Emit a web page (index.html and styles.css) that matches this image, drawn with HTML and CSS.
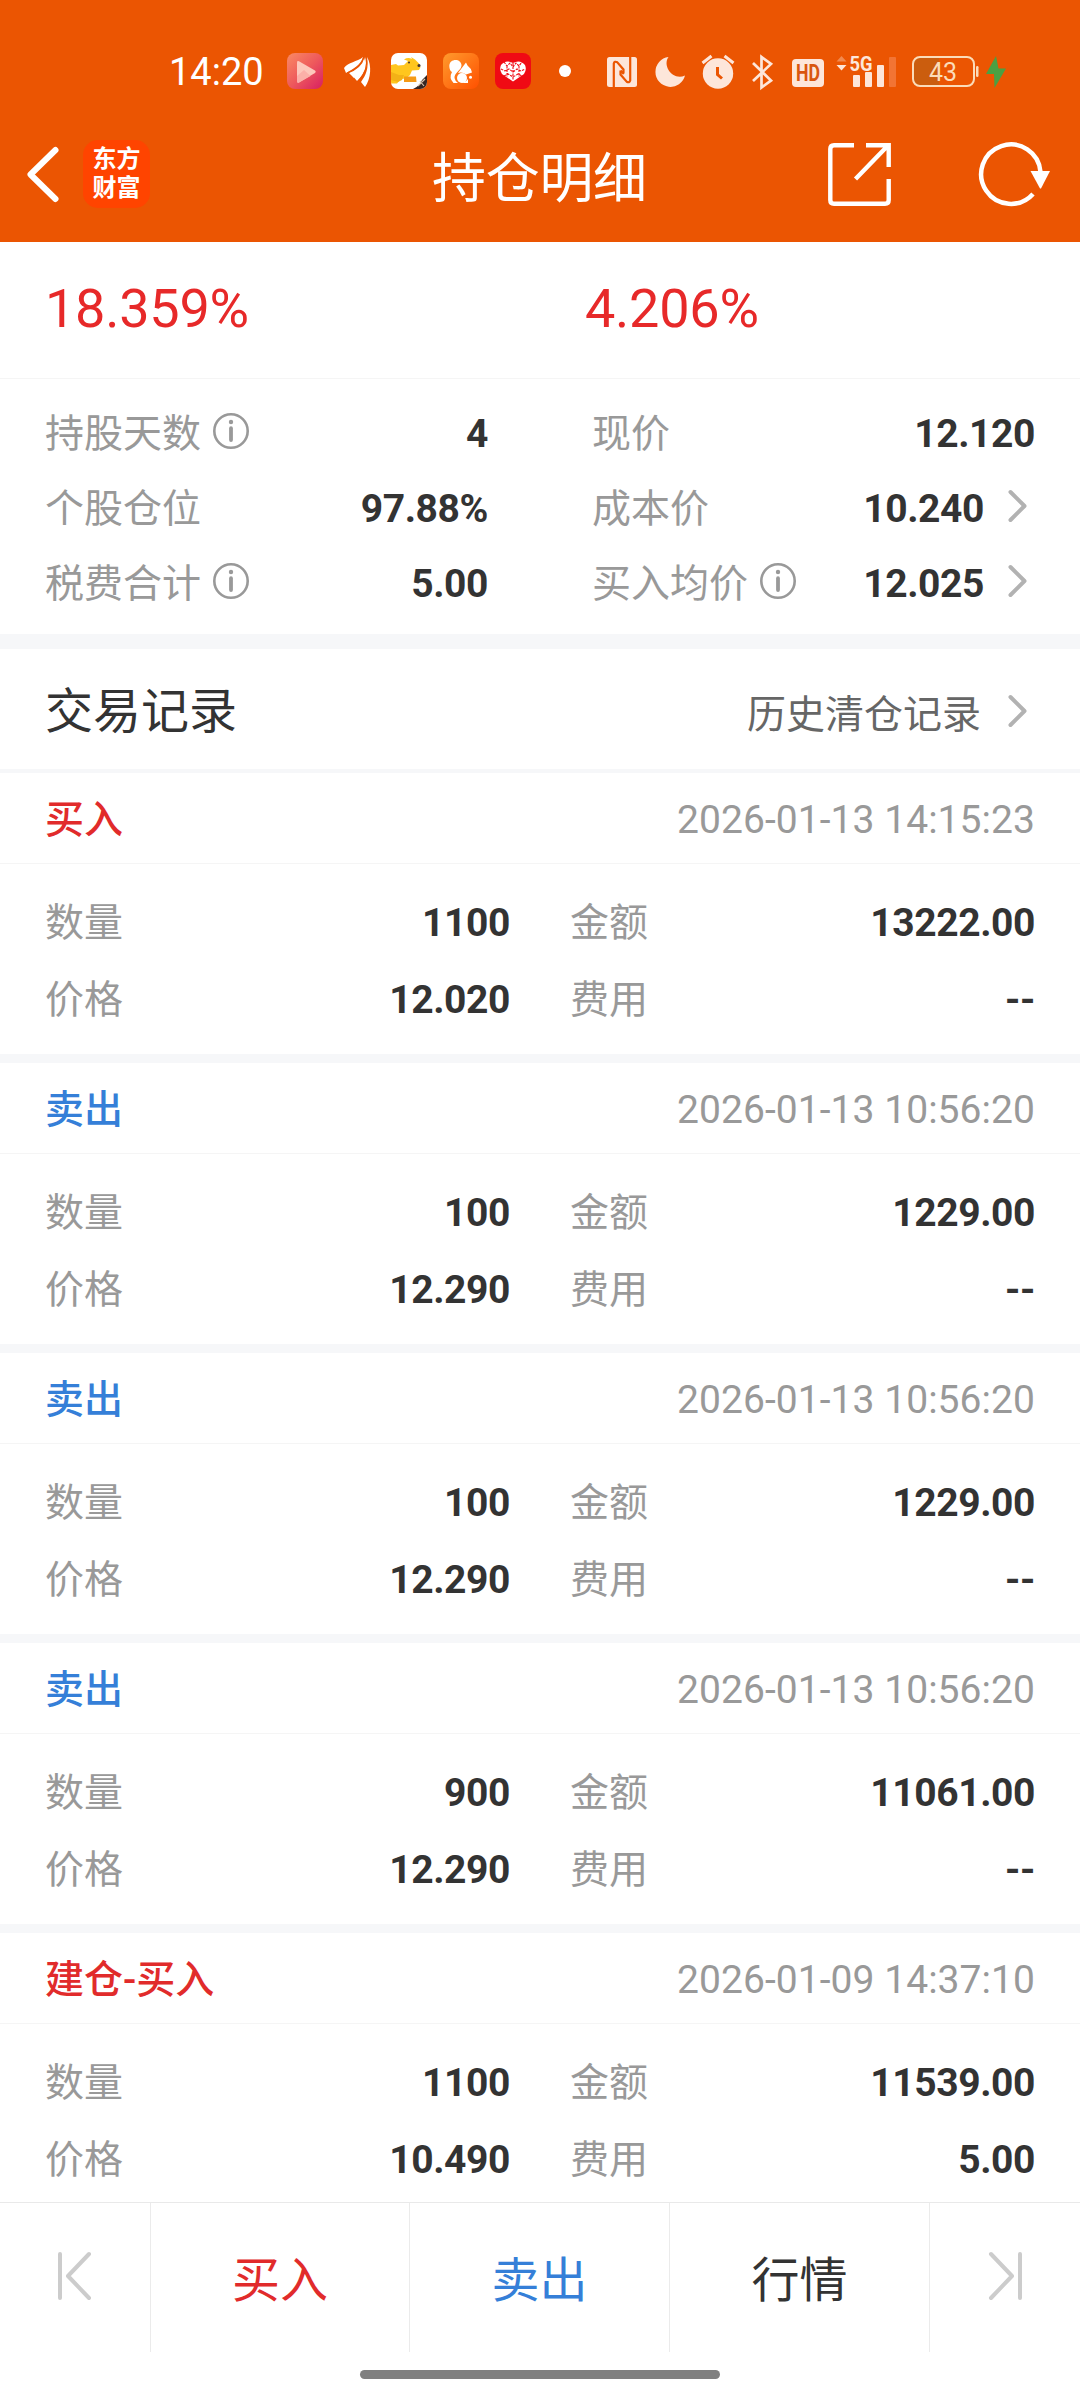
FILE: index.html
```html
<!DOCTYPE html>
<html lang="zh-CN">
<head>
<meta charset="utf-8">
<title>持仓明细</title>
<link rel="stylesheet" href="styles.css">
</head>
<body>
<svg class="defs" width="0" height="0" aria-hidden="true">
  <symbol id="info" viewBox="0 0 36 36"><circle cx="18" cy="18" r="16.7" fill="none" stroke="#999" stroke-width="2.6"/><circle cx="18" cy="9" r="2.2" fill="#999"/><path d="M18 15.2V27" stroke="#999" stroke-width="3.8" stroke-linecap="round"/></symbol>
  <symbol id="chevron" viewBox="0 0 20 34"><path d="M2.5 3L16.5 17L2.5 31" fill="none" stroke="#b2b2b2" stroke-width="4" stroke-linecap="round" stroke-linejoin="round"/></symbol>
</svg>
<header class="header">
  <div class="status">
    <span class="clock">14:20</span>
    <div class="apps">
      <svg width="36" height="42" viewBox="287 50 36 42">
        <defs><linearGradient id="pink" x1="0" y1="0" x2="1" y2="1"><stop offset="0" stop-color="#fa8a64"/><stop offset=".5" stop-color="#ee5a5c"/><stop offset="1" stop-color="#d81e62"/></linearGradient></defs>
        <rect x="287" y="53" width="36" height="36" rx="8" fill="url(#pink)"/>
        <path d="M297 62.500q0-2 2-1.200l16 9.200q1.600 1.200 0 2.400l-16 9.500q-2 .8-2-1.200z" fill="#fdc7bb"/><path d="M297 76l7-6 6.500 6L299 82.500q-2 .6-2-1.200z" fill="#fbb0a8"/>
      </svg>
      <svg width="36" height="42" viewBox="339 50 36 42">
        <g fill="#fff"><path d="M344 68C348 62 357 62 363 57C361 65 353 69 346 73Z"/><path d="M352 75C357 69 364 66 365 57C369 63 366 72 357 81Z"/><path d="M349 73C355 70 361 66 364 58C366 66 359 72 354 78Z"/><path d="M361 82C366 75 369 68 367 57C372 65 371 79 365 87Z"/></g>
        <g fill="none" stroke="#eb5502" stroke-width="1.300"><path d="M347 73C356 70 362 65 364 57"/><path d="M358 82C365 74 368 65 366 57"/></g>
      </svg>
      <svg width="36" height="42" viewBox="391 50 36 42">
        <clipPath id="app3"><rect x="391" y="53" width="36" height="36" rx="7"/></clipPath>
        <g clip-path="url(#app3)"><path d="M391 53h36v36h-36z" fill="#fff"/><path d="M391 65l5-1 2 1.500 6-.5 4-4-4-1.500q4-2.500 8-.5l-1-2 4 2.500 4 4 1.500 3.500-1.500 3-7 .5-2 4.500-4 3.500-5 .5-4 4.500h-7z" fill="#ffc61e"/><path d="M391 72l8 3 5 0-2 5-4 2-7-2z" fill="#f3b117"/><path d="M404 76.500h12l.5 5.500h-12.500z" fill="#f59a16"/><circle cx="419" cy="65.500" r="1.500" fill="#433"/><circle cx="409" cy="62.500" r="1" fill="#433"/><path d="M427 75v14h-14q7-3 9-9z" fill="#362623"/><path d="M418 86l3-3M422 82l3-3M420 81l4 5" stroke="#d9c1aa" stroke-width="1.200"/></g>
      </svg>
      <svg width="36" height="42" viewBox="443 50 36 42">
        <defs><linearGradient id="ucbg" x1="0" y1="0" x2="1" y2="1"><stop offset="0" stop-color="#ff9b2d"/><stop offset="1" stop-color="#ff5000"/></linearGradient></defs>
        <rect x="443" y="53" width="36" height="36" rx="8" fill="url(#ucbg)"/>
        <path d="M449.300 66C449.300 58 461.500 58 461.500 65.500C461.500 70 454 73 454.500 78Q455 81 458 83H453.500Q448.500 78 452 72Q449.500 71 449.300 66Z" fill="#fff"/>
        <path d="M458 73L466 62.500L467.500 65.500Q471 68 472 72.500L466 74.500Q462 71.500 458 73Z" fill="#fff"/>
        <circle cx="462" cy="78" r="5" fill="#fff"/><path d="M459 83Q465 83 468 79V83Z" fill="#fff"/><circle cx="470.500" cy="77.300" r="1.500" fill="#fff"/>
      </svg>
      <svg width="36" height="42" viewBox="495 50 36 42">
        <rect x="495" y="53" width="36" height="36" rx="8" fill="#f00a14"/>
        <path d="M513 81.500L502 74q-3-4-1-9 5-6 12-2 7-4 12 2 2 5-1 9z" fill="#fff"/>
        <g fill="none" stroke="#f00a14" stroke-width="1.100"><path d="M501 69l4 2 4-2 4 3 4-3 4 2 4-2M504 62l3 4 3-3 3 4 3-4 3 3 3-4M504 76l4-2 5 3 5-3 4 2M507 66v11M519 66v11M513 63v17" stroke-dasharray="2.500 1"/></g>
      </svg>
    </div>
    <span class="dot"></span>
    <div class="signals">
      <svg width="30" height="42" viewBox="607 50 30 42"><rect x="607" y="57" width="30" height="30" rx="2.500" fill="#fde6da"/><path d="M613.800 87V63.500Q614.500 60.800 617.300 62.300L623.500 69.500V73.500M630.200 57V80.500Q629.500 83.200 626.700 81.700L620.500 74.500V70.500M620.500 70.500L623.800 74" fill="none" stroke="#eb5502" stroke-width="2.200"/></svg>
      <svg width="30" height="42" viewBox="655 50 30 42"><path d="M668.500 57C662 66 673 81 685 75.500A15 15 0 1 1 668.500 57Z" fill="#fde6da"/></svg>
      <svg width="31" height="42" viewBox="703 50 31 42"><circle cx="718" cy="73.500" r="15.200" fill="#fde6da"/><path d="M702.500 63L711.500 56M733.500 63L724.500 56" stroke="#fde6da" stroke-width="3"/><path d="M717.500 67V74.500L722 78.500" fill="none" stroke="#eb5502" stroke-width="3"/></svg>
      <svg width="22" height="42" viewBox="752 50 22 42"><path d="M753 63L771 80.500L761.500 87.500V57L771 64L753 81" fill="none" stroke="#fde6da" stroke-width="2.700"/></svg>
      <svg width="32" height="42" viewBox="792 50 32 42"><rect x="792" y="59" width="32" height="28" rx="4" fill="#fde6da"/><text x="808" y="81" class="hd" text-anchor="middle" textLength="24" lengthAdjust="spacingAndGlyphs">HD</text></svg>
      <svg class="cell" width="60" height="42" viewBox="836 50 60 42"><path d="M836.500 61.500L841.500 56L846.500 61.500Z" fill="#f18a50"/><path d="M836.500 65L841.500 70.500L846.500 65Z" fill="#fde6da"/><text x="849.500" y="70.500" class="net" textLength="23" lengthAdjust="spacingAndGlyphs">5G</text><g fill="#fde6da"><rect x="853" y="75" width="7" height="12" rx="1"/><rect x="865" y="72" width="7" height="15" rx="1"/><rect x="877" y="65" width="7" height="22" rx="1"/></g><rect x="889" y="57" width="7" height="30" rx="1" fill="#f27434"/></svg>
      <svg class="battery" width="94" height="42" viewBox="912 50 94 42"><path d="M919 58h20v28h-20q-6 0-6-6v-16q0-6 6-6z" fill="#cb5d0e"/><rect x="913" y="57" width="61" height="29" rx="7" fill="none" stroke="#fbdcb9" stroke-width="2"/><rect x="976" y="66" width="2.500" height="11" rx="1.200" fill="#fbdcb9"/><text x="943" y="80.500" class="pct" text-anchor="middle">43</text><path d="M996 56L986 74H994L994.500 88L1006 68.500H998.500Z" fill="#4ba043"/></svg>
    </div>
  </div>
  <nav class="navbar">
    <svg class="back" width="36" height="60" viewBox="25 144 36 60"><path d="M55.500 150L30.500 174.500L55.500 199" fill="none" stroke="#fff" stroke-width="6" stroke-linecap="round" stroke-linejoin="round"/></svg>
    <div class="logo"><span>东方</span><span>财富</span></div>
    <h1 class="title">持仓明细</h1>
    <svg class="share" width="64" height="64" viewBox="828 142 64 64"><path d="M854 145.200H834Q830.300 145.200 830.300 149V200Q830.300 203.700 834 203.700H885Q888.700 203.700 888.700 200V179M866 145.200H888.700V167M888 145.500L855.500 179" fill="none" stroke="#fff" stroke-width="4.400"/></svg>
    <svg class="refresh" width="72" height="66" viewBox="978 141 72 66"><path d="M1040.500 172A29.700 29.700 0 1 0 1033 194" fill="none" stroke="#fff" stroke-width="4.500"/><path d="M1030.500 171H1050L1041 188.500H1040Z" fill="#fff"/></svg>
  </nav>
</header>

<main class="content">
  <section class="rates"><span>18.359%</span><span>4.206%</span></section>
  <section class="summary">
    <div class="col">
      <div class="item"><span class="label">持股天数</span><svg class="info"><use href="#info"/></svg><b>4</b></div>
      <div class="item"><span class="label">个股仓位</span><b>97.88%</b></div>
      <div class="item"><span class="label">税费合计</span><svg class="info"><use href="#info"/></svg><b>5.00</b></div>
    </div>
    <div class="col">
      <div class="item"><span class="label">现价</span><b>12.120</b></div>
      <div class="item"><span class="label">成本价</span><b>10.240</b><svg class="chevron"><use href="#chevron"/></svg></div>
      <div class="item"><span class="label">买入均价</span><svg class="info"><use href="#info"/></svg><b>12.025</b><svg class="chevron"><use href="#chevron"/></svg></div>
    </div>
  </section>
  <section class="records-head"><h2>交易记录</h2><a class="history">历史清仓记录</a><svg class="chevron"><use href="#chevron"/></svg></section>

  <article class="record">
    <div class="record-head"><span class="buy">买入</span><time>2026-01-13 14:15:23</time></div>
    <div class="grid">
      <div class="cellrow"><span class="label">数量</span><b>1100</b></div><div class="cellrow"><span class="label">金额</span><b>13222.00</b></div>
      <div class="cellrow"><span class="label">价格</span><b>12.020</b></div><div class="cellrow"><span class="label">费用</span><b>--</b></div>
    </div>
  </article>
  <article class="record">
    <div class="record-head"><span class="sell">卖出</span><time>2026-01-13 10:56:20</time></div>
    <div class="grid">
      <div class="cellrow"><span class="label">数量</span><b>100</b></div><div class="cellrow"><span class="label">金额</span><b>1229.00</b></div>
      <div class="cellrow"><span class="label">价格</span><b>12.290</b></div><div class="cellrow"><span class="label">费用</span><b>--</b></div>
    </div>
  </article>
  <article class="record">
    <div class="record-head"><span class="sell">卖出</span><time>2026-01-13 10:56:20</time></div>
    <div class="grid">
      <div class="cellrow"><span class="label">数量</span><b>100</b></div><div class="cellrow"><span class="label">金额</span><b>1229.00</b></div>
      <div class="cellrow"><span class="label">价格</span><b>12.290</b></div><div class="cellrow"><span class="label">费用</span><b>--</b></div>
    </div>
  </article>
  <article class="record">
    <div class="record-head"><span class="sell">卖出</span><time>2026-01-13 10:56:20</time></div>
    <div class="grid">
      <div class="cellrow"><span class="label">数量</span><b>900</b></div><div class="cellrow"><span class="label">金额</span><b>11061.00</b></div>
      <div class="cellrow"><span class="label">价格</span><b>12.290</b></div><div class="cellrow"><span class="label">费用</span><b>--</b></div>
    </div>
  </article>
  <article class="record">
    <div class="record-head"><span class="buy">建仓-买入</span><time>2026-01-09 14:37:10</time></div>
    <div class="grid">
      <div class="cellrow"><span class="label">数量</span><b>1100</b></div><div class="cellrow"><span class="label">金额</span><b>11539.00</b></div>
      <div class="cellrow"><span class="label">价格</span><b>10.490</b></div><div class="cellrow"><span class="label">费用</span><b>5.00</b></div>
    </div>
  </article>
</main>

<footer class="footer">
  <div class="tabs">
    <div class="tab arrow"><svg width="34" height="48" viewBox="0 0 34 48"><path d="M2 2V46M31 2L10 24L31 46" fill="none" stroke="#ccc" stroke-width="4" stroke-linecap="round" stroke-linejoin="round"/></svg></div>
    <div class="tab buy">买入</div>
    <div class="tab sell">卖出</div>
    <div class="tab">行情</div>
    <div class="tab arrow"><svg width="34" height="48" viewBox="0 0 34 48"><path d="M32 2V46M3 2L24 24L3 46" fill="none" stroke="#ccc" stroke-width="4" stroke-linecap="round" stroke-linejoin="round"/></svg></div>
  </div>
  <div class="home"></div>
</footer>
</body>
</html>
```
FILE: styles.css
```css
* { box-sizing: border-box; }
body {
  margin: 0;
  width: 1080px;
  height: 2400px;
  display: flex;
  flex-direction: column;
  overflow: hidden;
  background: #fff;
  color: #333;
  font: 39px/54px Roboto, "Noto Sans CJK SC", sans-serif;
  white-space: nowrap;
}
svg { display: block; flex: none; overflow: visible; }
.defs { position: absolute; }

/* header */
.header { height: 242px; flex: none; background: #eb5502; color: #fff; }
.status { height: 106px; padding: 50px 74px 14px 169px; display: flex; align-items: center; }
.clock { width: 118px; font-size: 38px; line-height: 42px; padding-top: 2px; }
.apps { display: flex; gap: 16px; }
.dot { width: 12px; height: 12px; border-radius: 50%; background: #fff; margin-left: 28px; }
.signals { display: flex; gap: 18px; margin-left: 36px; }
.cell { margin-left: -6px; }
.battery { margin-left: -2px; }
.hd { font: 700 23px Roboto, sans-serif; fill: #d9560f; }
.net { font: 700 20px Roboto, sans-serif; fill: #fde6da; }
.pct { font: 400 25px Roboto, sans-serif; fill: #fbdcb9; }

.navbar { height: 136px; display: flex; align-items: center; padding: 0 30px 0 25px; }
.back { margin-right: 22px; }
.logo {
  width: 67px;
  height: 68px;
  border-radius: 15px;
  background: #ff4400;
  display: flex;
  flex-direction: column;
  align-items: center;
  justify-content: center;
  font-size: 24px;
  font-weight: 700;
  line-height: 29px;
}
.title { margin: 0 0 0 282px; width: 216px; font-size: 54px; font-weight: 400; line-height: 64px; letter-spacing: -0.3px; padding-top: 11px; }
.share { margin-left: 180px; }
.refresh { margin-left: 86px; }

/* summary */
.content { flex: 1; min-height: 0; overflow: hidden; }
.rates {
  height: 137px;
  padding: 35px 45px 0;
  display: grid;
  grid-template-columns: 540px 1fr;
  border-bottom: 1px solid #f5f5f5;
  color: #e72929;
  font-size: 54px;
  line-height: 64px;
  letter-spacing: -0.25px;
}
.summary {
  height: 270px;
  padding: 17px 45px 13px;
  border-bottom: 15px solid #f6f7f9;
  display: grid;
  grid-template-columns: 443px 443px;
  column-gap: 104px;
}
.item { height: 75px; display: flex; align-items: center; }
.label { color: #999; padding-top: 1px; }
b { font-weight: 700; margin-left: auto; letter-spacing: -0.4px; }
.info { width: 36px; height: 36px; margin: -5px 0 0 12px; }
.chevron { width: 20px; height: 34px; margin: -5px 7px 0 24px; }

.records-head { height: 124px; border-bottom: 4px solid #f6f7f9; padding: 5px 45px 0; display: flex; align-items: center; }
h2 { margin: 0 auto 0 0; font-size: 48px; font-weight: 400; }
.history { color: #666; padding-top: 6px; }
.records-head .chevron { margin-left: 27px; margin-top: -1px; }

/* trade records */
.record { height: 290px; border-bottom: 9px solid #f6f7f9; }
.record-head { height: 91px; padding: 3px 45px 0; border-bottom: 1px solid #f5f5f5; display: flex; align-items: center; justify-content: space-between; }
.record-head span { font-weight: 500; padding-top: 1px; }
.record-head time { color: #999; letter-spacing: 0.05px; }
.buy { color: #e12b2b; }
.sell { color: #357fd8; }
.grid { padding: 20px 45px 0; display: grid; grid-template-columns: 1fr 1fr; column-gap: 60px; }
.cellrow { height: 77px; display: flex; align-items: center; }

/* bottom bar */
.footer { height: 198px; flex: none; background: #fff; border-top: 1px solid #e9e9e9; display: flex; flex-direction: column; align-items: center; }
.tabs { width: 100%; height: 149px; display: grid; grid-template-columns: 151px 259px 260px 260px 150px; }
.tab { display: flex; align-items: center; justify-content: center; padding-top: 7px; border-right: 1px solid #ebebeb; font-size: 48px; }
.tab:last-child { border-right: 0; }
.arrow { padding-top: 0; padding-bottom: 4px; }
.home { width: 360px; height: 9px; margin-top: 18px; border-radius: 5px; background: #808080; }
```
